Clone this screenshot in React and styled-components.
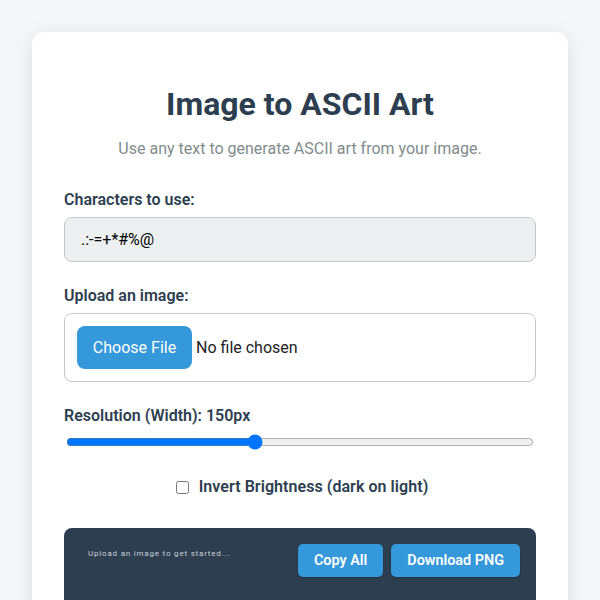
import React from 'react';
import styled, { createGlobalStyle } from 'styled-components';

const Global = createGlobalStyle`
  html, body {
    margin: 0;
    height: 600px;
    overflow: hidden;
    background: #f4f7f8;
  }
  * { box-sizing: border-box; }
`;

const Page = styled.div`
  padding: 32px;
  font-family: Roboto, "Liberation Sans", sans-serif;
  color: #2c3e50;
`;

const Card = styled.main`
  background: #fff;
  border-radius: 12px;
  padding: 48px 32px 32px;
  box-shadow: 0 4px 20px rgba(0, 0, 0, 0.1);
`;

const Title = styled.h1`
  margin: 0 0 9px;
  font-size: 32px;
  line-height: 48px;
  font-weight: 700;
  text-align: center;
`;

const Subtitle = styled.p`
  margin: 0 0 27px;
  font-size: 16px;
  line-height: 24px;
  color: #7f8c8d;
  text-align: center;
`;

const Field = styled.div`
  margin-bottom: 22px;
`;

const Label = styled.label`
  display: block;
  margin-bottom: 5px;
  font-size: 16px;
  line-height: 24px;
  font-weight: 600;
`;

const TextInput = styled.input`
  display: block;
  width: 100%;
  height: 45px;
  padding: 0 16px;
  background: #ecf0f1;
  border: 1px solid #c3c8cb;
  border-radius: 8px;
  font-family: inherit;
  font-size: 16px;
  color: #000;
`;

const FileBox = styled.div`
  display: flex;
  align-items: center;
  gap: 4px;
  height: 69px;
  padding: 0 12px;
  border: 1px solid #c3c8cb;
  border-radius: 8px;
  font-size: 16px;
  color: #222;
`;

const FileButton = styled.span`
  display: flex;
  align-items: center;
  justify-content: center;
  width: 115px;
  height: 43px;
  background: #3498db;
  color: #fff;
  border-radius: 8px;
`;

const Range = styled.input`
  display: block;
  width: calc(100% - 4px);
  margin: 6px 2px 0;
  height: 16px;
`;

const CheckRow = styled.label`
  display: flex;
  align-items: center;
  justify-content: center;
  gap: 10px;
  margin: 25px 0 29px;
  padding-left: 4px;
  font-size: 16px;
  line-height: 24px;
  font-weight: 600;
  letter-spacing: 0.06px;
`;

const Check = styled.input`
  width: 13px;
  height: 13px;
  margin: 0;
`;

const Output = styled.section`
  display: flex;
  justify-content: space-between;
  align-items: flex-start;
  height: 140px;
  padding: 16px 16px 16px 24px;
  background: #2c3e50;
  border-radius: 8px;
`;

const OutputText = styled.pre`
  margin: 4px 0 0;
  font-family: Roboto, sans-serif;
  font-size: 8px;
  line-height: 12px;
  letter-spacing: 0.8px;
  color: #ccd3d9;
`;

const Actions = styled.div`
  display: flex;
  gap: 8px;
`;

const ActionButton = styled.button`
  height: 33px;
  padding: 0 16px;
  border: none;
  border-radius: 5px;
  background: #3498db;
  color: #fff;
  font-family: inherit;
  font-size: 14.4px;
  font-weight: 600;
  box-shadow: 0 1px 2px rgba(0, 0, 0, 0.2);
`;

export default function App() {
  return (
    <Page>
      <Global />
      <Card>
        <Title>Image to ASCII Art</Title>
        <Subtitle>Use any text to generate ASCII art from your image.</Subtitle>

        <Field>
          <Label>Characters to use:</Label>
          <TextInput defaultValue=".:-=+*#%@" />
        </Field>

        <Field>
          <Label>Upload an image:</Label>
          <FileBox>
            <FileButton>Choose File</FileButton>
            <span>No file chosen</span>
          </FileBox>
        </Field>

        <Field>
          <Label>Resolution (Width): 150px</Label>
          <Range type="range" min="50" max="300" defaultValue="150" />
        </Field>

        <CheckRow>
          <Check type="checkbox" />
          Invert Brightness (dark on light)
        </CheckRow>

        <Output>
          <OutputText>Upload an image to get started...</OutputText>
          <Actions>
            <ActionButton>Copy All</ActionButton>
            <ActionButton>Download PNG</ActionButton>
          </Actions>
        </Output>
      </Card>
    </Page>
  );
}
